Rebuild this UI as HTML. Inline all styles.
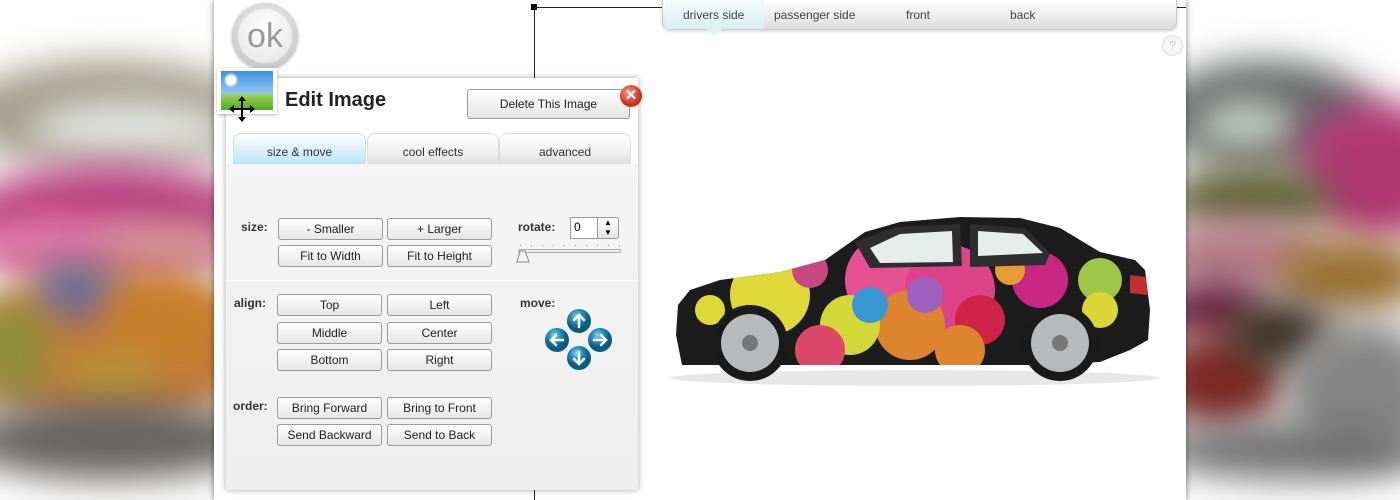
<!DOCTYPE html>
<html><head><style>
*{margin:0;padding:0;box-sizing:border-box}
body{width:1400px;height:500px;overflow:hidden;position:relative;background:#fff;font-family:"Liberation Sans",sans-serif}
.side{position:absolute;top:0;height:500px;overflow:hidden}
.blob{position:absolute;border-radius:50%;filter:blur(18px)}
.main{position:absolute;left:214px;top:0;width:972px;height:500px;background:#fff;box-shadow:0 0 6px rgba(0,0,0,.5)}
.btn{position:absolute;width:105px;height:22px;border:1px solid #9a9a9a;border-radius:3px;background:linear-gradient(#fdfdfd,#e6e6e6);font-size:12px;color:#222;text-align:center;line-height:20px}
.lbl{position:absolute;font-size:12px;font-weight:bold;color:#333}
.tab{position:absolute;top:133px;height:31px;border-radius:8px 8px 0 0;border:1px solid #ddd;border-bottom:none;font-size:12px;color:#333;text-align:center;line-height:36px;background:linear-gradient(#fff,#f0f0f0 60%,#ddd)}
</style></head><body>
<div class="side" style="left:0;width:214px;background:#fff">
 <div class="blob" style="left:-40px;top:60px;width:300px;height:110px;background:#a29e8c"></div>
 <div class="blob" style="left:30px;top:100px;width:200px;height:60px;background:#e0e3df"></div>
 <div class="blob" style="left:-40px;top:165px;width:300px;height:110px;background:#b8407e"></div>
 <div class="blob" style="left:-30px;top:215px;width:180px;height:60px;background:#e07aa8"></div>
 <div class="blob" style="left:100px;top:220px;width:140px;height:50px;background:#d49a9a"></div>
 <div class="blob" style="left:-40px;top:270px;width:300px;height:160px;background:#c27a3a"></div>
 <div class="blob" style="left:35px;top:260px;width:80px;height:60px;background:#6e6c9e"></div>
 <div class="blob" style="left:110px;top:280px;width:120px;height:90px;background:#c97f2c"></div>
 <div class="blob" style="left:-30px;top:300px;width:80px;height:100px;background:#8e8f3c"></div>
 <div class="blob" style="left:60px;top:350px;width:100px;height:60px;background:#b89338"></div>
 <div class="blob" style="left:-40px;top:400px;width:300px;height:80px;background:#676462"></div>
</div>
<div class="side" style="left:1186px;width:214px;background:#fff">
 <div class="blob" style="left:-30px;top:60px;width:220px;height:110px;background:#666868"></div>
 <div class="blob" style="left:10px;top:100px;width:100px;height:50px;background:#c5cec7"></div>
 <div class="blob" style="left:110px;top:100px;width:160px;height:140px;background:#b03774"></div>
 <div class="blob" style="left:-20px;top:165px;width:170px;height:70px;background:#5f6238"></div>
 <div class="blob" style="left:-30px;top:215px;width:170px;height:80px;background:#b57f8a"></div>
 <div class="blob" style="left:90px;top:235px;width:150px;height:80px;background:#9a7236"></div>
 <div class="blob" style="left:-30px;top:280px;width:110px;height:60px;background:#6a2040"></div>
 <div class="blob" style="left:-30px;top:330px;width:130px;height:100px;background:#7d2a26"></div>
 <div class="blob" style="left:40px;top:300px;width:110px;height:70px;background:#3b2f22"></div>
 <div class="blob" style="left:100px;top:320px;width:150px;height:140px;background:#858585"></div>
 <div class="blob" style="left:-30px;top:420px;width:280px;height:60px;background:#707070"></div>
</div>
<div class="main"></div>
<div style="position:absolute;left:531px;top:4px;width:6px;height:6px;background:#000"></div>
<div style="position:absolute;left:534px;top:7px;width:652px;height:1px;background:#222"></div>
<div style="position:absolute;left:534px;top:7px;width:1px;height:72px;background:#222"></div>
<div style="position:absolute;left:534px;top:488px;width:1px;height:12px;background:#222"></div>
<div style="position:absolute;left:662px;top:0;width:515px;height:30px;border:1px solid #ccc;border-top:none;border-radius:0 0 8px 8px;background:linear-gradient(#fff,#eee 50%,#dcdcdc);box-shadow:0 1px 3px rgba(0,0,0,.2);font-size:12px;color:#444">
 <div style="position:absolute;left:2px;top:0;width:99px;height:29px;background:linear-gradient(#f4fbfc,#d8f0f4)"></div>
 <span style="position:absolute;left:20px;top:8px">drivers side</span>
 <span style="position:absolute;left:111px;top:8px">passenger side</span>
 <span style="position:absolute;left:243px;top:8px">front</span>
 <span style="position:absolute;left:347px;top:8px">back</span>
</div>
<div style="position:absolute;left:706px;top:29px;width:0;height:0;border-left:8px solid transparent;border-right:8px solid transparent;border-top:7px solid #e0f2f5"></div>
<div style="position:absolute;left:1162px;top:35px;width:21px;height:21px;border-radius:50%;border:1px solid #ddd;background:radial-gradient(#fff,#eee);color:#ccc;font-size:13px;text-align:center;line-height:19px">?</div>
<div style="position:absolute;left:232px;top:3px;width:66px;height:66px;border-radius:50%;background:radial-gradient(circle at 50% 40%,#fafafa,#ccc 70%,#aaa);box-shadow:0 1px 3px rgba(0,0,0,.3)"></div>
<div style="position:absolute;left:238px;top:9px;width:54px;height:54px;border-radius:50%;background:radial-gradient(circle at 50% 35%,#fff,#e2e2e2);color:#999;font-size:34px;text-align:center;line-height:54px">ok</div>
<div style="position:absolute;left:226px;top:78px;width:412px;height:412px;background:#fff;box-shadow:0 0 6px rgba(0,0,0,.35)">
 <div style="position:absolute;left:0;top:86px;width:412px;height:326px;background:linear-gradient(#f5f5f5,#eee)"></div>
</div>
<div class="tab" style="left:233px;width:133px;background:linear-gradient(#fff,#e4f4fb 40%,#b8e4f7);border-color:#cde">size &amp; move</div>
<div class="tab" style="left:367px;width:132px">cool effects</div>
<div class="tab" style="left:499px;width:132px">advanced</div>
<div style="position:absolute;left:217px;top:68px;width:60px;height:46px;background:#fff;box-shadow:0 1px 3px rgba(0,0,0,.3)"></div>
<div style="position:absolute;left:221px;top:71px;width:52px;height:39px;background:linear-gradient(#3d8ee0,#8ec6f2 55%,#9bd253 62%,#4caa25)"></div>
<div style="position:absolute;left:225px;top:74px;width:12px;height:12px;border-radius:50%;background:#fff;filter:blur(1px)"></div>
<svg style="position:absolute;left:228px;top:95px" width="28" height="28" viewBox="0 0 28 28"><path d="M14 1l4 5h-3v7h7v-3l5 4-5 4v-3h-7v7h3l-4 5-4-5h3v-7H6v3l-5-4 5-4v3h7V6h-3z" fill="#000"/></svg>
<div style="position:absolute;left:285px;top:89px;font-size:20px;font-weight:bold;color:#222">Edit Image</div>
<div class="btn" style="left:467px;top:89px;width:163px;height:30px;line-height:28px;font-size:12px">Delete This Image</div>
<div style="position:absolute;left:620px;top:85px;width:22px;height:22px;border-radius:50%;background:radial-gradient(circle at 40% 35%,#f98,#d0301e 60%,#a21);color:#fff;font-weight:bold;font-size:15px;text-align:center;line-height:21px">✕</div>
<div style="position:absolute;left:226px;top:280px;width:412px;height:1px;background:#fff"></div>
<div class="lbl" style="left:241px;top:220px">size:</div>
<div class="btn" style="left:278px;top:218px">- Smaller</div>
<div class="btn" style="left:387px;top:218px">+ Larger</div>
<div class="btn" style="left:278px;top:245px">Fit to Width</div>
<div class="btn" style="left:387px;top:245px">Fit to Height</div>
<div class="lbl" style="left:234px;top:296px">align:</div>
<div class="btn" style="left:277px;top:294px">Top</div>
<div class="btn" style="left:387px;top:294px">Left</div>
<div class="btn" style="left:277px;top:322px">Middle</div>
<div class="btn" style="left:387px;top:322px">Center</div>
<div class="btn" style="left:277px;top:349px">Bottom</div>
<div class="btn" style="left:387px;top:349px">Right</div>
<div class="lbl" style="left:233px;top:399px">order:</div>
<div class="btn" style="left:277px;top:397px">Bring Forward</div>
<div class="btn" style="left:387px;top:397px">Bring to Front</div>
<div class="btn" style="left:277px;top:424px">Send Backward</div>
<div class="btn" style="left:387px;top:424px">Send to Back</div>
<div class="lbl" style="left:518px;top:220px">rotate:</div>
<div style="position:absolute;left:570px;top:217px;width:28px;height:22px;border:1px solid #999;background:#fff;font-size:12px;padding:2px 3px">0</div>
<div style="position:absolute;left:597px;top:217px;width:22px;height:22px;border:1px solid #999;border-radius:0 3px 3px 0;background:linear-gradient(#fff,#e4e4e4);font-size:8px;text-align:center;line-height:10px">▲<br>▼</div>
<div style="position:absolute;left:518px;top:249px;width:103px;height:4px;border:1px solid #aaa;border-radius:2px;background:#eee"></div>
<div style="position:absolute;left:520px;top:245px;width:100px;height:1px;background-image:linear-gradient(90deg,#999 1px,transparent 1px);background-size:11px 1px"></div>
<svg style="position:absolute;left:516px;top:250px" width="14" height="14"><path d="M4 1h5l4 11H1z" fill="#f2f2f2" stroke="#888"/></svg>
<div class="lbl" style="left:520px;top:296px">move:</div>
<svg style="position:absolute;left:544px;top:308px" width="70" height="64" viewBox="0 0 70 64">
<defs><radialGradient id="g" cx=".4" cy=".3"><stop offset="0" stop-color="#8fd3ef"/><stop offset=".5" stop-color="#2590bf"/><stop offset="1" stop-color="#0d5a82"/></radialGradient></defs>
<g stroke="#fff" stroke-width="2.5" fill="none" stroke-linecap="round">
<circle cx="35" cy="13" r="12" fill="url(#g)" stroke="none"/><path d="M35 19V7M30 12l5-5 5 5"/>
<circle cx="13" cy="32" r="12" fill="url(#g)" stroke="none"/><path d="M19 32H7M12 27l-5 5 5 5"/>
<circle cx="56" cy="32" r="12" fill="url(#g)" stroke="none"/><path d="M50 32h12M57 27l5 5-5 5"/>
<circle cx="35" cy="50" r="12" fill="url(#g)" stroke="none"/><path d="M35 44v12M30 51l5 5 5-5"/></g></svg>
<svg style="position:absolute;left:660px;top:200px" width="510" height="200" viewBox="0 0 510 200">
<defs><clipPath id="c"><path id="bd" d="M22 165L16 135 18 105 30 90 60 80 120 72 165 60 205 32 240 22 300 17 360 18 400 28 440 52 475 60 485 70 490 110 488 140 470 150 440 162 380 165 120 165z"/></clipPath></defs>
<ellipse cx="255" cy="178" rx="245" ry="8" fill="#ddd" opacity=".7"/>
<use href="#bd" fill="#1c1c1c"/>
<g clip-path="url(#c)" opacity=".95">
<circle cx="110" cy="95" r="40" fill="#e9e33a"/><circle cx="230" cy="80" r="45" fill="#f2559a"/><circle cx="290" cy="90" r="45" fill="#e8468f"/>
<circle cx="250" cy="125" r="35" fill="#e88a30"/><circle cx="190" cy="125" r="30" fill="#dfe23a"/><circle cx="320" cy="120" r="25" fill="#d8254a"/>
<circle cx="210" cy="105" r="18" fill="#3a9edc"/><circle cx="265" cy="95" r="18" fill="#a565c8"/><circle cx="380" cy="80" r="28" fill="#d22a8a"/>
<circle cx="440" cy="80" r="22" fill="#a5d24a"/><circle cx="160" cy="150" r="25" fill="#e84b6d"/><circle cx="50" cy="110" r="15" fill="#e9e33a"/>
<circle cx="400" cy="150" r="20" fill="#d3387a"/><circle cx="300" cy="150" r="25" fill="#e88a30"/><circle cx="85" cy="140" r="14" fill="#8a2a96"/>
<circle cx="350" cy="70" r="15" fill="#f2a33a"/><circle cx="440" cy="110" r="18" fill="#e6e03a"/><circle cx="150" cy="70" r="18" fill="#d14a8a"/>
</g>
<path d="M195 42L235 27 300 24 302 66 210 68z" fill="#2e2e2e"/>
<path d="M210 48L240 34 292 31 293 62 220 63z" fill="#e6ece9"/><path d="M310 24l55 4 25 25-5 12-75 2z" fill="#2e2e2e"/><path d="M318 31l45 3 20 19-65 3z" fill="#e6ece9"/>
<circle cx="90" cy="143" r="38" fill="#1a1a1a"/><circle cx="90" cy="143" r="29" fill="#b7b9bb"/><circle cx="90" cy="143" r="8" fill="#777"/>
<circle cx="400" cy="143" r="38" fill="#1a1a1a"/><circle cx="400" cy="143" r="29" fill="#b7b9bb"/><circle cx="400" cy="143" r="8" fill="#777"/>
<path d="M470 75l16 2 2 18-18-2z" fill="#c23030"/>
</svg>
</body></html>
